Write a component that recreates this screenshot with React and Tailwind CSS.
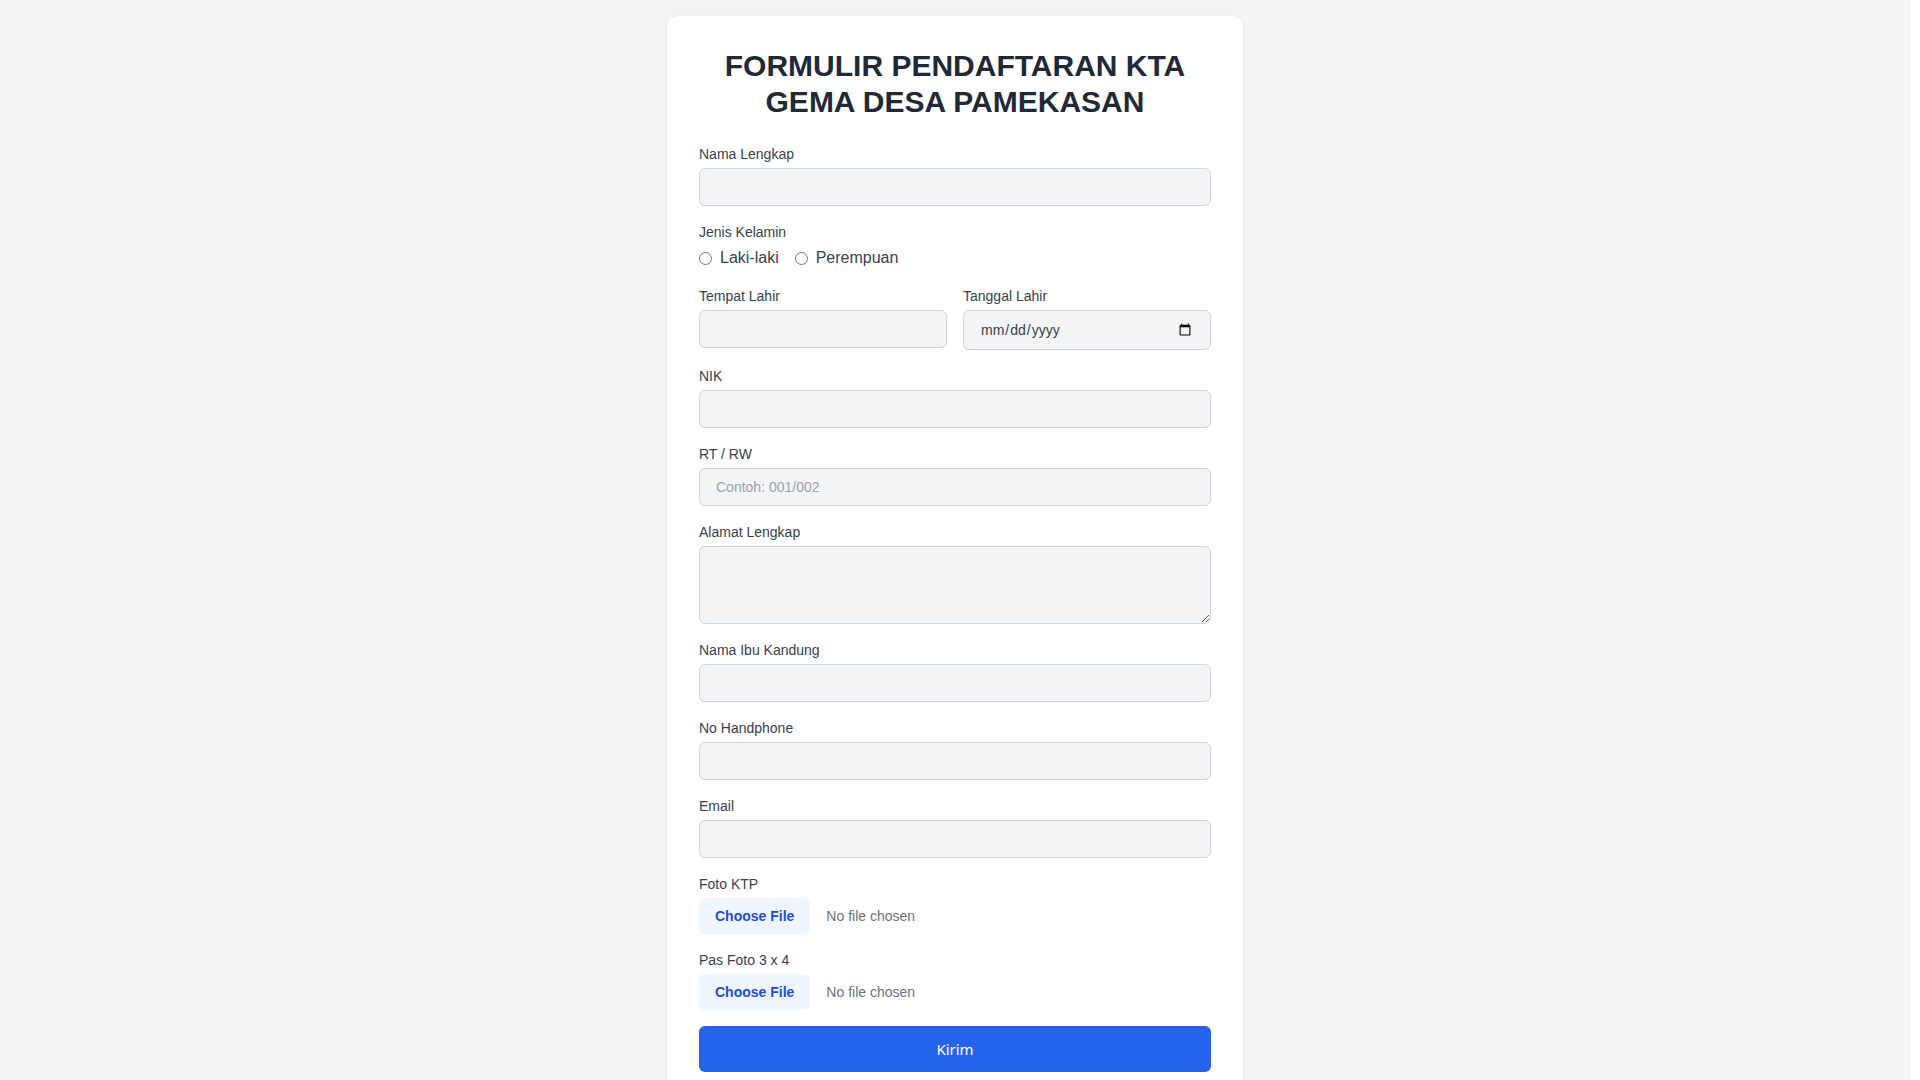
import React, { useState } from "react";

const inputClass =
  "w-full px-4 py-2 bg-[#f3f4f6] border border-[#d1d5db] rounded-md text-sm text-[#374151] placeholder-[#9ca3af] focus:outline-none focus:ring-2 focus:ring-[#3b82f6]";

const fileClass =
  "block w-full text-sm text-[#6b7280] file:mr-4 file:py-2 file:px-4 file:rounded-md file:border-0 file:text-sm file:font-semibold file:bg-[#eff6ff] file:text-[#1d4ed8]";

function Field({ label, children }) {
  return (
    <div>
      <label className="block text-sm text-[#374151] mb-1">{label}</label>
      {children}
    </div>
  );
}

export default function App() {
  const [form, setForm] = useState({ gender: "" });

  const handleChange = (e) => {
    setForm({ ...form, [e.target.name]: e.target.value });
  };

  return (
    <div
      className="min-h-screen bg-[#f3f4f6] border-r-[10px] border-white"
      style={{ fontFamily: '"Liberation Sans", Arial, sans-serif' }}
    >
      <div className="py-4">
        <form
          onSubmit={(e) => e.preventDefault()}
          className="max-w-xl mx-auto bg-white rounded-xl shadow-sm p-8"
        >
          <h1 className="text-3xl font-bold text-center text-[#1f2937] mb-6">
            FORMULIR PENDAFTARAN KTA
            <br />
            GEMA DESA PAMEKASAN
          </h1>

          <div className="space-y-4">
            <Field label="Nama Lengkap">
              <input name="nama" className={inputClass} onChange={handleChange} />
            </Field>

            <Field label="Jenis Kelamin">
              <div className="flex items-center gap-4 text-base text-[#374151]">
                <label className="flex items-center gap-2">
                  <input
                    type="radio"
                    name="gender"
                    value="L"
                    onChange={handleChange}
                  />
                  Laki-laki
                </label>
                <label className="flex items-center gap-2">
                  <input
                    type="radio"
                    name="gender"
                    value="P"
                    onChange={handleChange}
                  />
                  Perempuan
                </label>
              </div>
            </Field>

            <div className="grid grid-cols-2 gap-4">
              <Field label="Tempat Lahir">
                <input name="tempat" className={inputClass} onChange={handleChange} />
              </Field>
              <Field label="Tanggal Lahir">
                <input
                  type="date"
                  name="tanggal"
                  className={inputClass + " h-10"}
                  onChange={handleChange}
                />
              </Field>
            </div>

            <Field label="NIK">
              <input name="nik" className={inputClass} onChange={handleChange} />
            </Field>

            <Field label="RT / RW">
              <input
                name="rtrw"
                placeholder="Contoh: 001/002"
                className={inputClass}
                onChange={handleChange}
              />
            </Field>

            <Field label="Alamat Lengkap">
              <textarea
                name="alamat"
                rows={3}
                className={inputClass + " block"}
                onChange={handleChange}
              />
            </Field>

            <Field label="Nama Ibu Kandung">
              <input name="ibu" className={inputClass} onChange={handleChange} />
            </Field>

            <Field label="No Handphone">
              <input name="hp" className={inputClass} onChange={handleChange} />
            </Field>

            <Field label="Email">
              <input
                type="email"
                name="email"
                className={inputClass}
                onChange={handleChange}
              />
            </Field>

            <Field label="Foto KTP">
              <input type="file" className={fileClass} />
            </Field>

            <Field label="Pas Foto 3 x 4">
              <input type="file" className={fileClass} />
            </Field>

            <button
              type="submit"
              className="w-full h-[46px] bg-[#2563eb] hover:bg-[#1d4ed8] text-white text-[15px] rounded-md"
              style={{ fontFamily: '"Noto Sans", sans-serif' }}
            >
              Kirim
            </button>
          </div>
        </form>
      </div>
    </div>
  );
}
